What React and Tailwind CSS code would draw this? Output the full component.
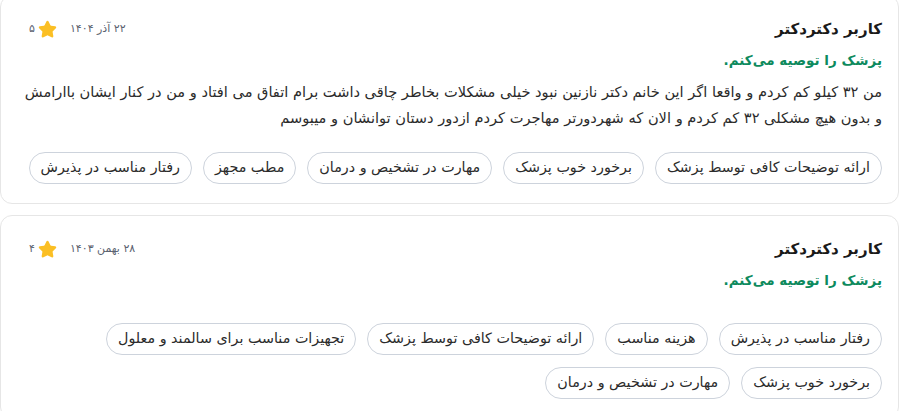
import { Star } from "lucide-react";

const reviews = [
  {
    user: "کاربر دکتردکتر",
    date: "۲۲ آذر ۱۴۰۴",
    rating: "۵",
    body: "من ۳۲ کیلو کم کردم و واقعا اگر این خانم دکتر نازنین نبود خیلی مشکلات بخاطر چاقی داشت برام اتفاق می افتاد و من در کنار ایشان باارامش و بدون هیچ مشکلی ۳۲ کم کردم و الان که شهردورتر مهاجرت کردم ازدور دستان توانشان و میبوسم",
    tags: [
      "ارائه توضیحات کافی توسط پزشک",
      "برخورد خوب پزشک",
      "مهارت در تشخیص و درمان",
      "مطب مجهز",
      "رفتار مناسب در پذیرش",
    ],
  },
  {
    user: "کاربر دکتردکتر",
    date: "۲۸ بهمن ۱۴۰۳",
    rating: "۴",
    body: "",
    tags: [
      "رفتار مناسب در پذیرش",
      "هزینه مناسب",
      "ارائه توضیحات کافی توسط پزشک",
      "تجهیزات مناسب برای سالمند و معلول",
      "برخورد خوب پزشک",
      "مهارت در تشخیص و درمان",
    ],
  },
];

function ReviewCard({ review }) {
  return (
    <div className="border border-[#e6e6e6] rounded-xl px-4 pt-[20px] pb-[19px]">
      <div className="flex items-center justify-between h-[26px]">
        <h3 className="text-[15px] font-bold text-[#1a1a1a]">{review.user}</h3>
        <div className="flex items-center gap-[13px] ml-3">
          <span className="text-[11px] text-[#5b6270]">{review.date}</span>
          <div className="flex items-center gap-[3px]">
            <Star size={19} className="fill-[#fbbf24] text-[#fbbf24]" />
            <span className="text-[11px] text-[#5b6270]">{review.rating}</span>
          </div>
        </div>
      </div>
      <p className="mt-[6px] text-[13.5px] font-bold leading-6 text-[#0d8a5d]">پزشک را توصیه می‌کنم.</p>
      <p className="mt-[7px] mb-[21px] min-h-[3px] text-[14.6px] leading-[26px] text-[#2b2b2b]">{review.body}</p>
      <div className="flex flex-wrap gap-x-[11px] gap-y-[12px]">
        {review.tags.map((t) => (
          <span
            key={t}
            className="h-[32px] px-[11px] flex items-center rounded-full border border-[#cdd3dc] text-[14.3px] text-[#2b2b2b]"
          >
            {t}
          </span>
        ))}
      </div>
    </div>
  );
}

export default function App() {
  return (
    <div dir="rtl" className="bg-white min-h-screen overflow-hidden" style={{ fontFamily: '"DejaVu Sans", sans-serif' }}>
      <div className="-mt-[5px] flex flex-col gap-[11px]">
        {reviews.map((r, i) => (
          <ReviewCard key={i} review={r} />
        ))}
      </div>
    </div>
  );
}
